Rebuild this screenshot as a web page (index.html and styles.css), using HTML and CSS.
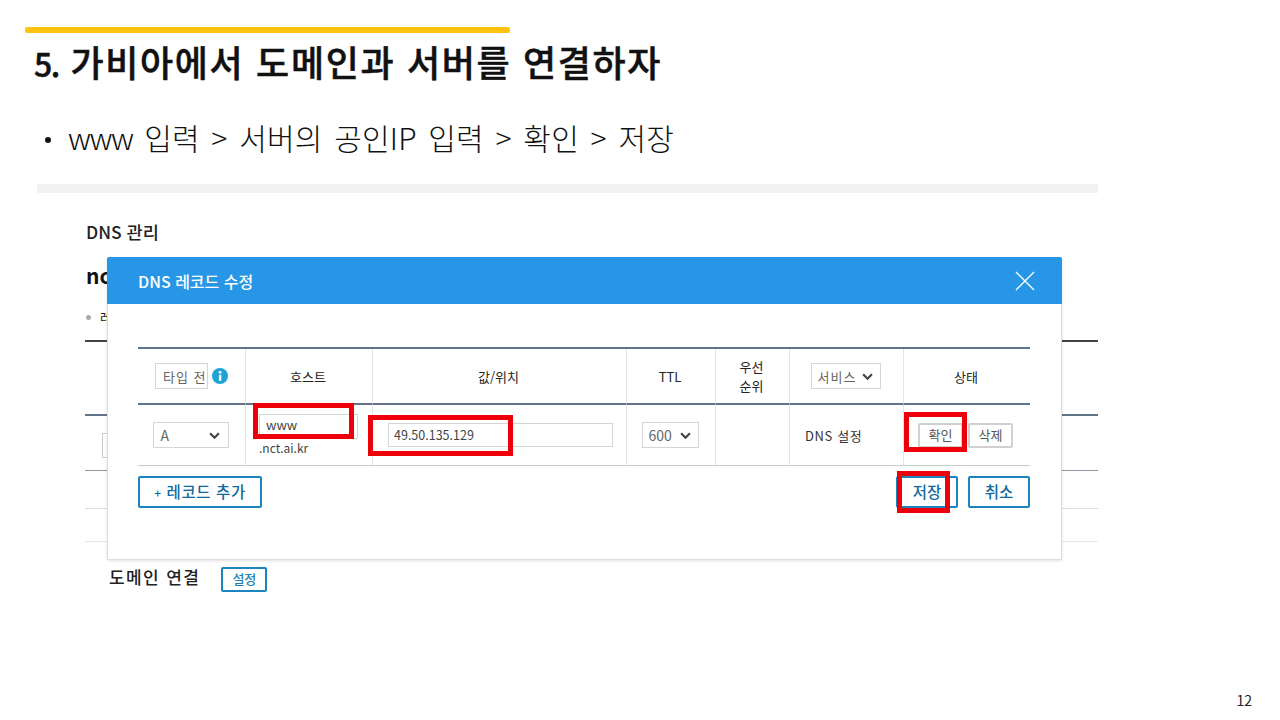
FILE: index.html
```html
<!DOCTYPE html>
<html lang="ko">
<head>
<meta charset="utf-8">
<title>5. 가비아에서 도메인과 서버를 연결하자</title>
<link rel="stylesheet" href="styles.css">
</head>
<body>
<main class="slide">
  <div class="accent"></div>
  <h1 class="title"><span class="lead">5.</span> 가비아에서 도메인과 서버를 연결하자</h1>
  <ul class="bullets"><li><span class="www">www</span> 입력 &gt; 서버의 공인IP 입력 &gt; 확인 &gt; 저장</li></ul>
  <section class="shot">
    <div class="strip"></div>
    <div class="page">
      <h2 class="crumb">DNS 관리</h2>
      <h3 class="domain">nct</h3>
      <p class="note"><span class="dot"></span>레코</p>
      <div class="bg-row r1"></div>
      <div class="bg-row r2"><span class="bg-input"></span></div>
      <div class="bg-row r3"></div>
      <div class="bg-row r4"></div>
      <div class="link-row"><strong>도메인 연결</strong><span class="mini-btn">설정</span></div>
    </div>
    <div class="modal">
      <header class="modal-head">
        <span>DNS 레코드 수정</span>
        <svg class="close" viewBox="0 0 20 20" width="20" height="20"><path d="M1 1L19 19M19 1L1 19" fill="none" stroke="#fff" stroke-width="1.3"/></svg>
      </header>
      <div class="table">
        <div class="cell head c-type"><span class="sel clip">타입 전</span><svg viewBox="0 0 16 16" width="16" height="16"><circle cx="8" cy="8" r="8" fill="#1fa3d6"/><rect x="6.9" y="6.8" width="2.4" height="6" fill="#fff"/><circle cx="8.1" cy="4.3" r="1.4" fill="#fff"/></svg></div>
        <div class="cell head">호스트</div>
        <div class="cell head">값/위치</div>
        <div class="cell head">TTL</div>
        <div class="cell head small">우선<br>순위</div>
        <div class="cell head"><span class="sel svc">서비스<svg class="chev" viewBox="0 0 10 6" width="11" height="7"><path d="M1 1L5 5L9 1" fill="none" stroke="#444" stroke-width="2"/></svg></span></div>
        <div class="cell head last">상태</div>

        <div class="cell"><span class="sel a">A<svg class="chev" viewBox="0 0 10 6" width="11" height="7"><path d="M1 1L5 5L9 1" fill="none" stroke="#444" stroke-width="2"/></svg></span></div>
        <div class="cell c-host"><span class="inp host">www</span><span class="suffix">.nct.ai.kr</span></div>
        <div class="cell c-val"><span class="inp val">49.50.135.129</span></div>
        <div class="cell"><span class="sel ttl">600<svg class="chev" viewBox="0 0 10 6" width="11" height="7"><path d="M1 1L5 5L9 1" fill="none" stroke="#444" stroke-width="2"/></svg></span></div>
        <div class="cell"></div>
        <div class="cell dns">DNS 설정</div>
        <div class="cell last c-act"><span class="gbtn">확인</span><span class="gbtn">삭제</span></div>
      </div>
      <div class="foot">
        <span class="bbtn add"><small>+</small> 레코드 추가</span>
        <span class="foot-right"><span class="bbtn act">저장</span><span class="bbtn act">취소</span></span>
      </div>
      <div class="mark m-host"></div>
      <div class="mark m-val"></div>
      <div class="mark m-ok"></div>
      <div class="mark m-save"></div>
    </div>
  </section>
  <footer class="num">12</footer>
</main>
</body>
</html>
```
FILE: styles.css
```css
* { box-sizing: border-box; }
html, body { margin: 0; padding: 0; background: #fff; }
body { font-family: "Noto Sans CJK KR", "Noto Sans", sans-serif; color: #111; }
.slide { width: 1280px; height: 720px; display: flex; flex-direction: column; overflow: hidden; }
.accent { width: 485px; height: 6px; margin: 27px 0 0 25px; background: #ffc20e; border-radius: 2px; }
.title { margin: 4px 0 0 34px; height: 48px; font-size: 36px; line-height: 48px; font-weight: 500; letter-spacing: 1.65px; word-spacing: 0; color: #111; white-space: nowrap; -webkit-text-stroke: 0.5px #111; }
.lead { font-size: 32px; line-height: 1; letter-spacing: -1.5px; }
.bullets { margin: 29px 0 0 0; padding: 0 0 0 45px; list-style: none; height: 46px; }
.bullets li { font-size: 30px; line-height: 46px; font-weight: 300; letter-spacing: 0.2px; word-spacing: 3px; color: #111; white-space: nowrap; }
.bullets li::before { content: ""; display: inline-block; width: 6px; height: 6px; margin: 0 17px 7px 0; border-radius: 50%; background: #111; }
.www { letter-spacing: -1.5px; }
.shot { position: relative; margin: 24px 0 0 37px; width: 1061px; }
.strip { height: 9px; background: #f2f2f2; }
.page { padding: 27px 0 0 49px; }
.crumb { margin: 0; font-size: 17.5px; line-height: 24px; font-weight: 500; color: #222; }
.domain { margin: 16px 0 0; font-size: 21px; line-height: 30px; font-weight: 700; color: #111; }
.note { margin: 18px 0 0; height: 18px; font-size: 13px; line-height: 18px; color: #222; }
.dot { display: inline-block; width: 5px; height: 5px; margin: 0 9px 2px 0; border-radius: 50%; background: #aaa; }
.bg-row { border-top: 1px solid #ccc; margin-left: -1px; }
.r1 { margin-top: 14px; height: 74px; border-top: 2px solid #444; }
.r2 { height: 56px; border-top: 2px solid #62748a; padding: 17px 0 0 17px; }
.r3 { height: 38px; border-top: 1px solid #8c97a3; }
.r4 { height: 33px; border-top: 1px solid #ddd; }
.bg-input { display: block; width: 20px; height: 25px; border: 1px solid #ccc; }
.link-row { margin-left: -1px; border-top: 1px solid #e6e6e6; display: flex; align-items: center; padding: 19px 0 0 24px; gap: 21px; }
.link-row strong { font-size: 17px; line-height: 24px; font-weight: 500; color: #222; letter-spacing: 1.4px; }
.mini-btn { width: 46px; height: 25px; margin-top: 6px; border: 2px solid #1c84c0; border-radius: 2px; font-size: 13px; line-height: 20px; font-weight: 500; text-align: center; color: #1c7fb8; }
.modal { position: absolute; left: 70px; top: 73px; width: 955px; height: 303px; background: #fff; border: 1px solid #ddd; border-top: 0; border-radius: 2px; box-shadow: 0 1px 3px rgba(0,0,0,.12); }
.modal-head { height: 47px; margin: 0 -1px; background: #2896e6; color: #fff; display: flex; align-items: center; justify-content: space-between; padding: 0 27px 0 31px; font-size: 16px; font-weight: 500; border-radius: 2px 2px 0 0; }
.table { margin: 43px 0 0 30px; width: 892px; display: grid; grid-template-columns: 108px 127px 254px 89px 74px 114px 126px; grid-template-rows: 56px 60px; border-top: 2px solid #62748a; border-bottom: 1px solid #ccc; font-size: 13px; color: #333; }
.cell { display: flex; align-items: center; justify-content: center; border-right: 1px solid #e4e4e4; text-align: center; line-height: 19px; padding-right: 2px; }
.cell.last { border-right: 0; }
.head { border-bottom: 2px solid #62748a; font-weight: 400; color: #222; }
.c-type { justify-content: flex-start; padding-left: 17px; gap: 4px; }
.sel { display: flex; align-items: center; justify-content: space-between; height: 26px; border: 1px solid #d5d5d5; font-size: 13px; font-weight: 400; color: #666; background: #fff; white-space: nowrap; overflow: hidden; }
.clip { width: 53px; padding-left: 7px; letter-spacing: 1px; }
.svc { width: 70px; padding: 0 7px 0 6px; letter-spacing: 1px; }
.a { width: 76px; padding: 0 8px 0 7px; font-size: 14px; }
.ttl { width: 57px; padding: 0 7px 0 6px; font-size: 14px; }
.inp { display: flex; align-items: center; border: 1px solid #d5d5d5; background: #fff; font-size: 12.5px; color: #444; }
.c-host { flex-direction: column; align-items: flex-start; padding-left: 13px; }
.host { width: 99px; height: 25px; padding: 0 0 3px 6px; font-size: 13px; }
.suffix { font-size: 12px; line-height: 18px; color: #444; }
.c-val { justify-content: flex-start; padding-left: 15px; }
.val { width: 225px; height: 24px; padding: 0 0 2px 5px; }
.dns { justify-content: flex-start; padding-left: 15px; font-size: 13px; letter-spacing: 0.6px; color: #333; }
.c-act { justify-content: flex-start; padding-left: 14px; gap: 5px; }
.gbtn { width: 45px; height: 25px; border: 2px solid #d0d0d0; border-radius: 2px; font-size: 13px; line-height: 19px; color: #555; text-align: center; }
.foot { margin: 10px 0 0 30px; width: 892px; display: flex; justify-content: space-between; }
.foot-right { display: flex; gap: 10px; }
.bbtn { display: block; height: 32px; border: 2px solid #1c84c0; border-radius: 2px; font-size: 15.5px; line-height: 26px; font-weight: 500; text-align: center; color: #116a9e; }
.bbtn small { font-size: 12px; }
.add { width: 124px; letter-spacing: 0.6px; }
.act { width: 62px; }
.mark { position: absolute; border: 5px solid #ee0008; }
.m-host { left: 145px; top: 146px; width: 101px; height: 36px; }
.m-val { left: 260px; top: 158px; width: 145px; height: 41px; }
.m-ok { left: 796px; top: 155px; width: 63px; height: 40px; }
.m-save { left: 789px; top: 214px; width: 53px; height: 42px; }
.num { margin: auto 28px 10px auto; font-size: 14px; line-height: 20px; color: #222; }
```
